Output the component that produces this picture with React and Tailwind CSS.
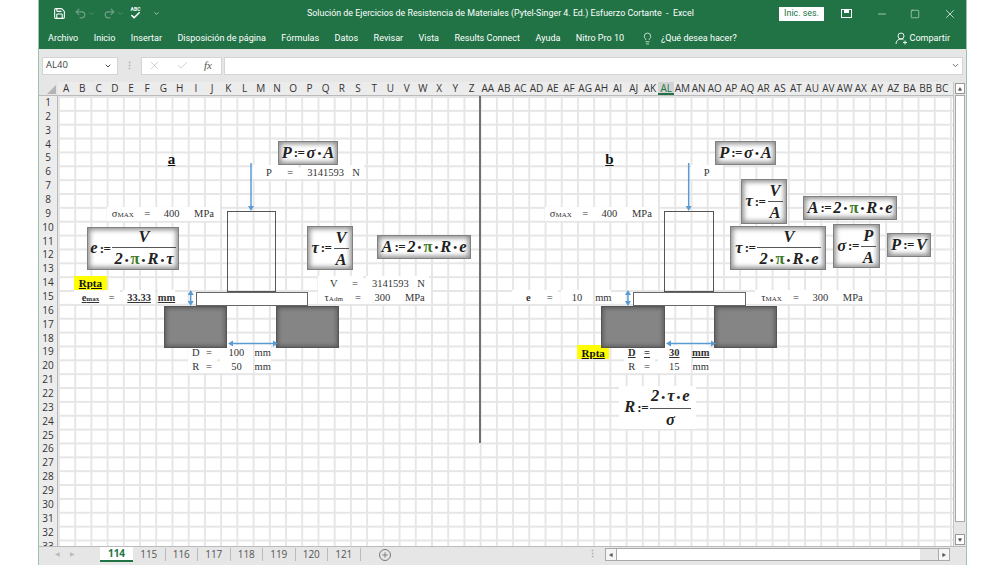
import React from "react";
import { Save, Undo2, Redo2, Check, ChevronDown, X, Minus, Square, Lightbulb, Plus, Triangle } from "lucide-react";

const colNames = [
  "A","B","C","D","E","F","G","H","I","J","K","L","M","N","O","P","Q","R","S","T","U","V","W","X","Y","Z",
  "AA","AB","AC","AD","AE","AF","AG","AH","AI","AJ","AK","AL","AM","AN","AO","AP","AQ","AR","AS","AT","AU","AV","AW","AX","AY","AZ","BA","BB","BC",
];
const rows = Array.from({ length: 33 }, (_, i) => i + 1);
const menu = ["Archivo","Inicio","Insertar","Disposición de página","Fórmulas","Datos","Revisar","Vista","Results Connect","Ayuda","Nitro Pro 10"];
const tabs = ["115","116","117","118","119","120","121"];

const Sub = ({ a, b }) => (
  <span>
    {a}
    <span className="text-[7px]">{b}</span>
  </span>
);

// c = first column (1 based), s = span, r = row, dx = nudge in px
const cells = [
  { c: 7, s: 2, r: 5, t: "a", big: true },
  { c: 13, s: 2, r: 6, t: "P" },
  { c: 15, s: 1, r: 6, t: "=", dx: -3 },
  { c: 16, s: 3, r: 6, t: "3141593" },
  { c: 19, s: 1, r: 6, t: "N", dx: -2 },
  { c: 4, s: 2, r: 9, t: <Sub a="σ" b="MAX" /> },
  { c: 6, s: 1, r: 9, t: "=" },
  { c: 7, s: 2, r: 9, t: "400" },
  { c: 9, s: 2, r: 9, t: "MPa" },
  { c: 17, s: 2, r: 14, t: "V" },
  { c: 19, s: 1, r: 14, t: "=", dx: -3 },
  { c: 20, s: 3, r: 14, t: "3141593" },
  { c: 23, s: 1, r: 14, t: "N", dx: -2 },
  { c: 2, s: 2, r: 14, t: "Rpta", rpta: true },
  { c: 2, s: 2, r: 15, t: <Sub a="e" b="max" />, bold: true },
  { c: 4, s: 1, r: 15, t: "=", dx: -3 },
  { c: 5, s: 2, r: 15, t: "33.33", bold: true },
  { c: 7, s: 1, r: 15, t: "mm", bold: true, dx: 3 },
  { c: 17, s: 2, r: 15, t: <Sub a="τ" b="Adm" /> },
  { c: 19, s: 1, r: 15, t: "=" },
  { c: 20, s: 2, r: 15, t: "300" },
  { c: 22, s: 2, r: 15, t: "MPa" },
  { c: 9, s: 1, r: 19, t: "D" },
  { c: 10, s: 1, r: 19, t: "=", dx: -3 },
  { c: 11, s: 2, r: 19, t: "100" },
  { c: 13, s: 1, r: 19, t: "mm", dx: 2 },
  { c: 9, s: 1, r: 20, t: "R" },
  { c: 10, s: 1, r: 20, t: "=", dx: -3 },
  { c: 11, s: 2, r: 20, t: "50" },
  { c: 13, s: 1, r: 20, t: "mm", dx: 2 },

  { c: 34, s: 2, r: 5, t: "b", big: true },
  { c: 40, s: 2, r: 6, t: "P" },
  { c: 31, s: 2, r: 9, t: <Sub a="σ" b="MAX" /> },
  { c: 33, s: 1, r: 9, t: "=" },
  { c: 34, s: 2, r: 9, t: "400" },
  { c: 36, s: 2, r: 9, t: "MPa" },
  { c: 29, s: 2, r: 15, t: "e", bold: true, noline: true },
  { c: 31, s: 1, r: 15, t: "=", dx: -3 },
  { c: 32, s: 2, r: 15, t: "10" },
  { c: 34, s: 1, r: 15, t: "mm", dx: 2 },
  { c: 44, s: 2, r: 15, t: <Sub a="τ" b="MAX" /> },
  { c: 46, s: 1, r: 15, t: "=" },
  { c: 47, s: 2, r: 15, t: "300" },
  { c: 49, s: 2, r: 15, t: "MPa" },
  { c: 33, s: 2, r: 19, t: "Rpta", rpta: true },
  { c: 36, s: 1, r: 19, t: "D", bold: true, dx: -2 },
  { c: 37, s: 1, r: 19, t: "=", bold: true, dx: -3 },
  { c: 38, s: 2, r: 19, t: "30", bold: true },
  { c: 40, s: 1, r: 19, t: "mm", bold: true, dx: 2 },
  { c: 36, s: 1, r: 20, t: "R", dx: -2 },
  { c: 37, s: 1, r: 20, t: "=", dx: -3 },
  { c: 38, s: 2, r: 20, t: "15" },
  { c: 40, s: 1, r: 20, t: "mm", dx: 2 },
];

const Pi = () => <span className="not-italic text-[#3f7a1e]">π</span>;
const Dot = () => <span className="mx-[2px] not-italic text-[11px]">•</span>;
const Def = () => <span className="mx-[2px] not-italic text-[13px] tracking-[-0.5px]">:=</span>;

const Frac = ({ top, bottom }) => (
  <span className="inline-flex flex-col items-center leading-[21px]">
    <span className="px-[1px] whitespace-nowrap">{top}</span>
    <span className="px-[2px] w-full text-center border-t border-[#555] whitespace-nowrap">{bottom}</span>
  </span>
);

// placed on the sheet like floating objects
const formulas = [
  { x: 278, y: 141, w: 60, h: 24, f: <>P<Def />σ<Dot />A</> },
  { x: 87, y: 227, w: 92, h: 43, f: <>e<Def /><Frac top="V" bottom={<>2<Dot /><Pi /><Dot />R<Dot />τ</>} /></> },
  { x: 307, y: 226, w: 46, h: 44, f: <>τ<Def /><Frac top="V" bottom="A" /></> },
  { x: 377, y: 235, w: 94, h: 24, f: <>A<Def />2<Dot /><Pi /><Dot />R<Dot />e</> },
  { x: 715, y: 141, w: 61, h: 24, f: <>P<Def />σ<Dot />A</> },
  { x: 741, y: 179, w: 46, h: 45, f: <>τ<Def /><Frac top="V" bottom="A" /></> },
  { x: 803, y: 196, w: 94, h: 24, f: <>A<Def />2<Dot /><Pi /><Dot />R<Dot />e</> },
  { x: 730, y: 226, w: 96, h: 44, f: <>τ<Def /><Frac top="V" bottom={<>2<Dot /><Pi /><Dot />R<Dot />e</>} /></> },
  { x: 833, y: 224, w: 47, h: 44, f: <>σ<Def /><Frac top="P" bottom="A" /></> },
  { x: 887, y: 233, w: 44, h: 24, f: <>P<Def />V</> },
  { x: 619, y: 386, w: 77, h: 43, plain: true, f: <>R<Def /><Frac top={<>2<Dot />τ<Dot />e</>} bottom="σ" /></> },
];

// column, plate and two supports of each figure
const Figure = ({ col, plate, left, right }) => (
  <>
    <div className="absolute border border-[#555] top-[115px] h-[81px]" style={{ left: col[0] - 58, width: col[1] - col[0] }} />
    <div className="absolute bg-white border border-[#666] top-[196px] h-[14px]" style={{ left: plate[0] - 58, width: plate[1] - plate[0] }} />
    {[left, right].map((s, i) => (
      <div
        key={i}
        className="absolute top-[210px] h-[42px] bg-[#858585] border border-[#555] shadow-[inset_0_0_4px_1px_#555]"
        style={{ left: s[0] - 58, width: s[1] - s[0] }}
      />
    ))}
  </>
);

const Arrows = () => (
  <svg className="absolute left-0 top-0 pointer-events-none" width="895" height="450" viewBox="58 96 895 450">
    <g stroke="#5b9bd5" strokeWidth="1.5" fill="#5b9bd5">
      <line x1="251" y1="163" x2="251" y2="207" />
      <polygon points="248,206 254,206 251,211" stroke="none" />
      <line x1="688.7" y1="163" x2="688.7" y2="207" />
      <polygon points="685.7,206 691.7,206 688.7,211" stroke="none" />
      <line x1="230" y1="343.5" x2="276" y2="343.5" />
      <polygon points="233,340.5 233,346.5 228,343.5" stroke="none" />
      <polygon points="273,340.5 273,346.5 278,343.5" stroke="none" />
      <line x1="668" y1="343.5" x2="714" y2="343.5" />
      <polygon points="671,340.5 671,346.5 666,343.5" stroke="none" />
      <polygon points="711,340.5 711,346.5 716,343.5" stroke="none" />
      <line x1="190.7" y1="292" x2="190.7" y2="303" />
      <polygon points="187.7,295 193.7,295 190.7,290" stroke="none" />
      <polygon points="187.7,301 193.7,301 190.7,306" stroke="none" />
      <line x1="628" y1="292" x2="628" y2="303" />
      <polygon points="625,295 631,295 628,290" stroke="none" />
      <polygon points="625,301 631,301 628,306" stroke="none" />
    </g>
  </svg>
);

const Sheet = () => (
  <div className="relative w-[895px] h-[450px] overflow-hidden bg-white bg-[linear-gradient(to_right,#e6e6e6_1.5px,transparent_1.5px),linear-gradient(to_bottom,#e6e6e6_1.5px,transparent_1.5px)] bg-[size:16.22px_13.87px] font-['Liberation_Serif',serif] text-[10.5px] text-[#333]">
    <div className="grid grid-cols-[repeat(56,16.22px)] grid-rows-[repeat(33,13.87px)]">
      {cells.map((cell, i) => {
        let look = "bg-white";
        if (cell.rpta) look = "bg-[#ffff00] font-bold text-[11px] underline text-[#111]";
        if (cell.big) look = "font-bold text-[15px] underline text-[#111]";
        return (
          <div
            key={i}
            className={`flex items-center justify-center pt-[1px] whitespace-nowrap ${look} ${cell.bold ? "font-bold" : ""} ${cell.bold && !cell.noline ? "underline" : ""}`}
            style={{ gridColumn: `${cell.c} / span ${cell.s}`, gridRow: cell.r, transform: cell.dx ? `translateX(${cell.dx}px)` : undefined }}
          >
            {cell.t}
          </div>
        );
      })}
    </div>

    <div className="absolute left-[421px] top-0 h-[347px] w-[1.5px] bg-[#707070]" />

    <Figure col={[227, 276]} plate={[196, 308]} left={[164, 227]} right={[276, 339]} />
    <Figure col={[664, 714]} plate={[633, 746]} left={[601, 665]} right={[714, 777]} />
    <Arrows />

    {formulas.map((m, i) => (
      <div
        key={i}
        className={`absolute flex items-center justify-center whitespace-nowrap font-bold italic text-[16.5px] text-[#222] ${m.plain ? "bg-white" : "bg-white border border-[#808080] shadow-[inset_0_0_5px_2px_#8f8f8f]"}`}
        style={{ left: m.x - 58, top: m.y - 96, width: m.w, height: m.h }}
      >
        {m.f}
      </div>
    ))}
  </div>
);

export default function App() {
  return (
    <div className="w-[1005px] h-[565px] overflow-hidden bg-white px-[38px] font-['Open_Sans',sans-serif]">
      <div className="w-[929px] h-full flex flex-col bg-[#e6e6e6] border-x border-[#9cc4ad]">
        {/* title bar */}
        <div className="h-[27px] bg-[#217346] flex items-center text-white text-[8.9px] font-['Roboto',sans-serif] relative">
          <div className="flex items-center pl-[14px] w-[260px]">
            <Save size={13} strokeWidth={2} />
            <Undo2 size={13} className="ml-[8px] text-[#6fa287]" />
            <ChevronDown size={7} className="ml-[1px] text-[#6fa287]" />
            <Redo2 size={13} className="ml-[8px] text-[#6fa287]" />
            <ChevronDown size={7} className="ml-[1px] text-[#6fa287]" />
            <div className="ml-[6px] flex flex-col items-center leading-none">
              <span className="text-[5px] font-bold">ABC</span>
              <Check size={11} strokeWidth={3.5} className="-mt-[2px]" />
            </div>
            <ChevronDown size={7} className="ml-[12px]" />
          </div>
          <div className="ml-[8px] whitespace-pre w-[472px]">
            Solución de Ejercicios de Resistencia de Materiales (Pytel-Singer 4. Ed.) Esfuerzo Cortante  -  Excel
          </div>
          <div className="w-[45px] h-[14px] bg-white text-[#217346] flex items-center justify-center">Inic. ses.</div>
          <div className="ml-[17px] w-[11px] h-[9px] border border-white flex items-start justify-center">
            <div className="w-[5px] h-[3px] bg-white" />
          </div>
          <Minus size={12} strokeWidth={1.2} className="ml-[24px]" />
          <Square size={10} strokeWidth={1.2} className="ml-[22px]" />
          <X size={14} strokeWidth={1.2} className="ml-[23px]" />
        </div>

        {/* ribbon tabs */}
        <div className="h-[22px] bg-[#217346] flex items-center gap-[15.4px] pl-[9px] pt-[1px] text-white text-[9.05px] font-['Roboto',sans-serif] whitespace-nowrap">
          {menu.map((m) => (
            <span key={m}>{m}</span>
          ))}
          <Lightbulb size={13} strokeWidth={1.3} className="ml-[2px] -mr-[9px]" />
          <span>¿Qué desea hacer?</span>
          <span className="ml-auto mr-[16px] flex items-center gap-[2px]">
            <svg width="13" height="13" viewBox="0 0 13 13" fill="none" stroke="white" strokeWidth="0.9">
              <circle cx="6" cy="4" r="3" />
              <path d="M1 12c0-3 2-5 5-5 1 0 2 .3 2.6 .8" />
              <path d="M10 8.5v4M8 10.5h4" />
            </svg>
            Compartir
          </span>
        </div>

        {/* formula bar */}
        <div className="h-[33px] flex items-center pl-[3px] pr-[3px] text-[#444] text-[9.5px]">
          <div className="w-[76px] h-[18px] bg-white border border-[#d4d4d4] flex items-center justify-between px-[3px]">
            AL40
            <ChevronDown size={8} strokeWidth={3} className="mr-[2px]" />
          </div>
          <div className="w-[23px] text-center text-[#aaa] text-[9px] font-bold">⋮</div>
          <div className="w-[81px] h-[18px] bg-white border border-[#d4d4d4] flex items-center justify-between pl-[6px] pr-[9px] text-[#b5b5b5]">
            <X size={13} strokeWidth={1.1} />
            <Check size={13} strokeWidth={1.1} />
            <span className="font-['Liberation_Serif',serif] italic text-[11px] text-[#555]">fx</span>
          </div>
          <div className="ml-[2px] flex-1 h-[18px] bg-white border border-[#d4d4d4] flex items-center justify-end pr-[2px]">
            <ChevronDown size={9} strokeWidth={2.5} className="text-[#666]" />
          </div>
        </div>

        {/* sheet */}
        <div className="flex h-[464px]">
          <div className="w-[19px] flex flex-col">
            <div className="h-[14px] bg-[#e6e6e6] border-b border-[#bbb] flex items-end justify-end pr-[2px] pb-[1px]">
              <div className="w-0 h-0 border-l-[9px] border-l-transparent border-b-[9px] border-b-[#b4b4b4]" />
            </div>
            <div className="h-[450px] overflow-hidden bg-[#ececec] border-r border-[#bbb] text-[10px] text-[#333]">
              {rows.map((r) => (
                <div key={r} className="h-[13.87px] leading-[13.87px] text-center">{r}</div>
              ))}
            </div>
          </div>
          <div className="w-[895px] flex flex-col">
            <div className="h-[14px] flex bg-[#ececec] border-b border-[#bbb] text-[10px] text-[#333]">
              {colNames.map((c) => (
                <div
                  key={c}
                  className={`w-[16.22px] shrink-0 flex justify-center leading-[13px] whitespace-nowrap ${c === "AL" ? "bg-[#d3d3d3] text-[#217346] border-b-2 border-[#217346]" : ""}`}
                >
                  {c}
                </div>
              ))}
            </div>
            <Sheet />
          </div>
          <div className="flex-1 flex flex-col bg-[#e6e6e6] border-l border-[#c6c6c6] items-center">
            <div className="mt-[1px] w-[10px] h-[11px] bg-white border border-[#999] flex items-center justify-center">
              <Triangle size={4} fill="#555" stroke="#555" />
            </div>
            <div className="mt-[1px] w-[10px] h-[427px] bg-white border border-[#aaa]" />
            <div className="mt-auto mb-[1px] w-[10px] h-[11px] bg-white border border-[#999] flex items-center justify-center">
              <Triangle size={4} fill="#555" stroke="#555" className="rotate-180" />
            </div>
          </div>
        </div>

        {/* sheet tabs */}
        <div className="h-[16px] border-t border-[#bbb] flex items-stretch text-[10px] text-[#555]">
          <div className="w-[61px] flex items-center gap-[10px] pl-[16px] text-[#bbb] text-[6px]">
            <span>◀</span>
            <span>▶</span>
          </div>
          <div className="w-[33px] bg-white border-b-2 border-[#217346] text-[#217346] font-bold text-center leading-[13px]">114</div>
          {tabs.map((t) => (
            <div key={t} className="w-[32.5px] text-center leading-[13px] border-r border-[#bbb] my-[1px]">{t}</div>
          ))}
          <div className="ml-[18px] w-[12px] h-[12px] mt-[2px] rounded-full border border-[#777] flex items-center justify-center">
            <Plus size={8} strokeWidth={2} />
          </div>
          <div className="ml-[197px] text-[#aaa] text-[9px] font-bold leading-[14px]">⋮</div>
          <div className="ml-[8px] mt-[1px] w-[345px] h-[13px] flex bg-white border border-[#aaa]">
            <div className="w-[11px] border-r border-[#aaa] bg-[#f5f5f5] flex items-center justify-center">
              <Triangle size={4} fill="#555" stroke="#555" className="-rotate-90" />
            </div>
            <div className="flex-1" />
            <div className="w-[18px] bg-[#e6e6e6]" />
            <div className="w-[11px] border-l border-[#aaa] bg-[#f5f5f5] flex items-center justify-center">
              <Triangle size={4} fill="#555" stroke="#555" className="rotate-90" />
            </div>
          </div>
        </div>
        <div className="flex-1" />
      </div>
    </div>
  );
}
